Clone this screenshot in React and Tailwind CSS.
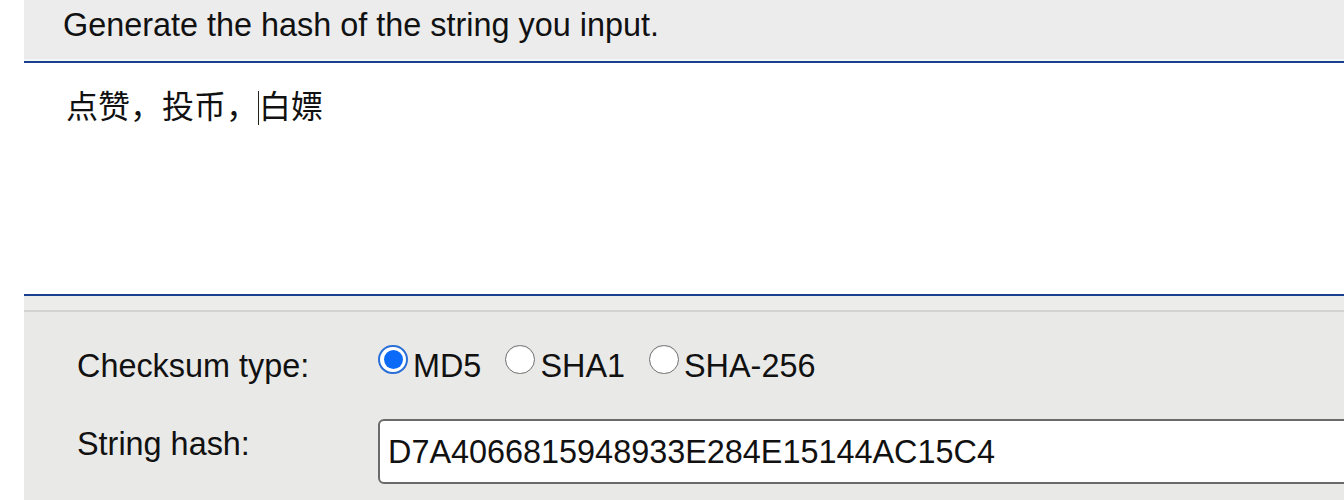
const latin = { fontFamily: '"Liberation Sans", Arial, sans-serif' };
const cjk = { fontFamily: '"Liberation Sans", "Noto Sans CJK SC", sans-serif' };

const Radio = ({ label, checked }) => (
  <label className="flex items-start gap-[5px] mr-[24px]">
    {checked ? (
      <span className="mt-[-5px] w-[30px] h-[29px] rounded-full border-[2px] border-[#2a6fd8] bg-white flex items-center justify-center">
        <span className="w-[19px] h-[19px] rounded-full bg-[#0b6af7]" />
      </span>
    ) : (
      <span className="mt-[-5px] w-[30px] h-[29px] rounded-full border-[1.5px] border-[#707070] bg-white shadow-[inset_0_1px_1px_rgba(0,0,0,0.08)]" />
    )}
    <span className="leading-[32px]">{label}</span>
  </label>
);

export default function App() {
  return (
    <div
      className="flex w-[1344px] h-[500px] overflow-hidden bg-white text-[32.4px] text-[#111]"
      style={latin}
    >
      <div className="w-6 shrink-0 bg-white" />
      <div className="flex-1 flex flex-col min-w-0">
        {/* header */}
        <div className="h-[59px] bg-[#ececec] pl-[39px] pt-[9px] leading-[32px]">
          Generate the hash of the string you input.
        </div>
        <div className="h-[2px] bg-[#f3f6f6]" />
        <div className="h-[2px] bg-[#1b3f8f]" />

        {/* text area */}
        <div className="h-[231px] bg-white pl-[42px] pt-[28px] leading-[32px] text-[32px]" style={cjk}>
          点赞，投币，
          <span className="inline-block w-0 h-[34px] border-l-[1.5px] border-[#222] align-middle -mt-[4px]" />
          白嫖
        </div>
        <div className="h-[2px] bg-[#1b3f8f]" />

        {/* options */}
        <div className="flex-1 bg-[#e9e9e8] flex flex-col">
          <div className="h-[14px] bg-[#ececeb]" />
          <div className="h-[2px] bg-[#d3d3d2]" />
          <div className="pl-[53px] pt-[38px]">
            <div className="flex items-start">
              <div className="w-[301px] shrink-0 leading-[32px]">Checksum type:</div>
              <div className="flex items-start">
                <Radio label="MD5" checked />
                <Radio label="SHA1" />
                <Radio label="SHA-256" />
              </div>
            </div>
            <div className="flex items-start mt-[37px]">
              <div className="w-[301px] shrink-0 leading-[32px] mt-[9px]">String hash:</div>
              <div className="w-[1100px] shrink-0 h-[65px] bg-white border-[2px] border-[#6a6a6a] rounded-[6px] pl-[8px] pt-[15px] leading-[32px]">
                D7A4066815948933E284E15144AC15C4
              </div>
            </div>
          </div>
        </div>
      </div>
    </div>
  );
}
